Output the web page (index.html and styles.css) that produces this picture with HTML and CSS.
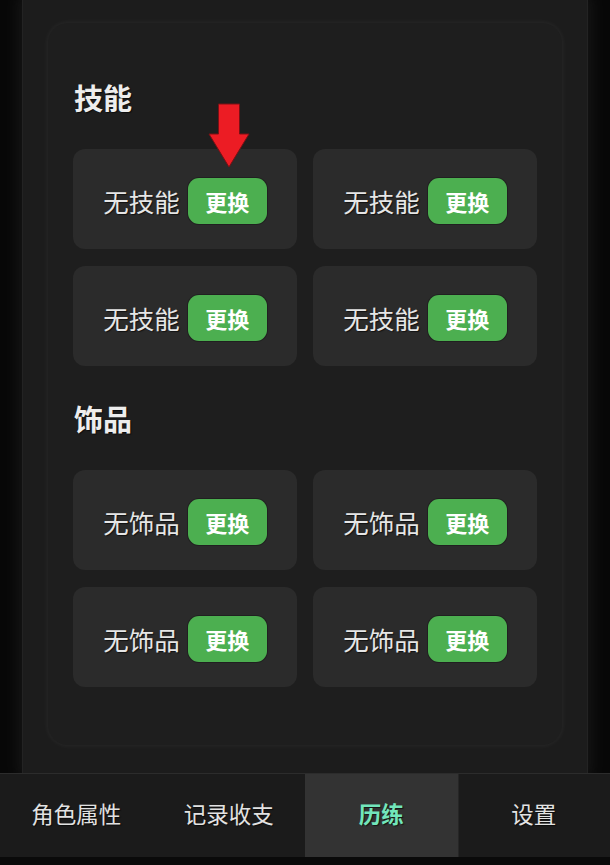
FILE: index.html
```html
<!DOCTYPE html>
<html lang="zh-CN">
<head>
<meta charset="utf-8">
<title>历练</title>
<link rel="stylesheet" href="styles.css">
</head>
<body>
<div class="screen">
  <div class="main">
    <div class="column">
      <div class="card">
        <h2 class="section-title">技能</h2>
        <div class="grid">
          <div class="slot">
            <span class="slot-label">无技能</span><button class="swap">更换</button>
            <svg class="arrow" width="44" height="66" viewBox="0 0 44 66"><path d="M11.5 1 H32.5 V31 H42 L22 64 L2 31 H11.5 Z" fill="#ec1c24" stroke="#7a1014" stroke-width="1"/></svg>
          </div>
          <div class="slot"><span class="slot-label">无技能</span><button class="swap">更换</button></div>
          <div class="slot"><span class="slot-label">无技能</span><button class="swap">更换</button></div>
          <div class="slot"><span class="slot-label">无技能</span><button class="swap">更换</button></div>
        </div>
        <h2 class="section-title second">饰品</h2>
        <div class="grid">
          <div class="slot"><span class="slot-label">无饰品</span><button class="swap">更换</button></div>
          <div class="slot"><span class="slot-label">无饰品</span><button class="swap">更换</button></div>
          <div class="slot"><span class="slot-label">无饰品</span><button class="swap">更换</button></div>
          <div class="slot"><span class="slot-label">无饰品</span><button class="swap">更换</button></div>
        </div>
      </div>
    </div>
  </div>
  <nav class="tabs">
    <div class="tab">角色属性</div>
    <div class="tab">记录收支</div>
    <div class="tab active">历练</div>
    <div class="tab">设置</div>
  </nav>
  <div class="bottom-gap"></div>
</div>
</body>
</html>
```

FILE: styles.css
```css
html, body {
  margin: 0;
  padding: 0;
  background: #080808;
  font-family: "Noto Sans CJK SC", "Noto Sans", sans-serif;
}
.screen {
  width: 610px;
  height: 865px;
  display: flex;
  flex-direction: column;
  overflow: hidden;
}
.main {
  flex: 1;
  display: flex;
  justify-content: center;
  overflow: hidden;
}
.column {
  width: 566px;
  box-sizing: border-box;
  background: #1c1c1c;
  box-shadow: 0 0 12px 4px #161616, inset 1px 0 0 #232323, inset -1px 0 0 #232323;
  padding: 23px 26px 0 26px;
}
.card {
  background: #1e1e1e;
  border-radius: 20px;
  height: 722px;
  box-sizing: border-box;
  padding: 55px 25px 0 25px;
  box-shadow: 0 0 5px 1px rgba(255, 255, 255, 0.05);
}
.section-title {
  margin: 0 0 33px 1px;
  font-size: 29px;
  line-height: 38px;
  font-weight: 700;
  color: #ededed;
  text-shadow: 1px 1px 1px rgba(0,0,0,0.6);
}
.section-title.second {
  margin-top: 33px;
  margin-bottom: 33px;
}
.grid {
  display: grid;
  grid-template-columns: 224px 224px;
  column-gap: 16px;
  row-gap: 17px;
}
.slot {
  position: relative;
  height: 100px;
  box-sizing: border-box;
  padding-top: 3px;
  background: #2b2b2b;
  border-radius: 12px;
  display: flex;
  align-items: center;
  justify-content: center;
  gap: 8px;
}
.slot-label {
  font-size: 25.5px;
  line-height: 34px;
  color: #e6e6e6;
  text-shadow: 1px 1px 1px rgba(0,0,0,0.6);
}
.swap {
  width: 79px;
  height: 46px;
  border: none;
  border-radius: 11px;
  background: #4caf50;
  color: #ffffff;
  font-family: "Noto Sans CJK SC", "Noto Sans", sans-serif;
  font-size: 22px;
  font-weight: 700;
  padding: 0;
  box-shadow: 0 0 0 1px rgba(0,0,0,0.25);
}
.arrow {
  position: absolute;
  left: 134px;
  top: -46px;
}
.tabs {
  height: 84px;
  box-sizing: border-box;
  border-top: 1px solid #2c2c2c;
  background: #1b1b1b;
  display: grid;
  grid-template-columns: repeat(4, 1fr);
}
.tab {
  display: flex;
  align-items: center;
  justify-content: center;
  padding-bottom: 5px;
  font-size: 22.5px;
  color: #e2e2e2;
  text-shadow: 1px 1px 1px rgba(0,0,0,0.6);
}
.tab.active {
  background: #333333;
  color: #72e6bb;
  font-weight: 700;
}
.tab.active + .tab {
  box-shadow: inset 1px 0 0 #262626;
}
.bottom-gap {
  height: 8px;
  background: #0a0a0a;
}
```
